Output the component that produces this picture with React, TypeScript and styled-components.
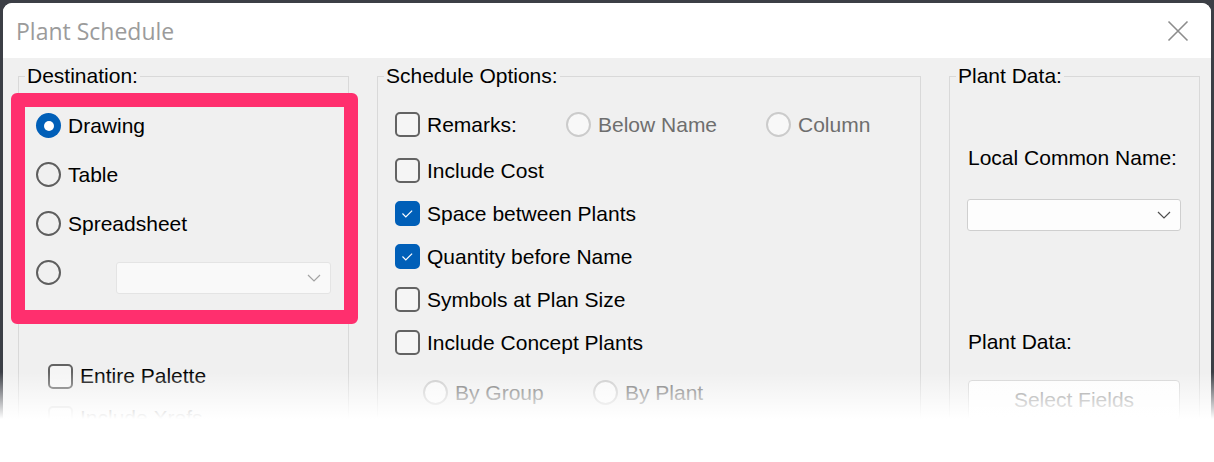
import React from "react";
import styled, { createGlobalStyle, css } from "styled-components";

const GlobalStyle = createGlobalStyle`
  html, body {
    margin: 0;
    padding: 0;
    background: #3c3f46;
  }
  body {
    font-family: "Liberation Sans", Arial, sans-serif;
  }
  * {
    box-sizing: border-box;
  }
`;

const Page = styled.div`
  position: relative;
  width: 1214px;
  height: 462px;
  padding: 3px 3px 0 3px;
  background: #3c3f46;
  overflow: hidden;
`;

const Dialog = styled.div`
  height: 100%;
  display: flex;
  flex-direction: column;
  border-radius: 9px 9px 0 0;
  overflow: hidden;
  background: #f0f0f0;
`;

const TitleBar = styled.div`
  flex: none;
  height: 55px;
  display: flex;
  align-items: center;
  justify-content: space-between;
  padding: 0 22px 0 13px;
  background: #fff;
`;

const Title = styled.div`
  font-family: "Open Sans", "Noto Sans", sans-serif;
  font-size: 23px;
  color: #9b9b9b;
`;

const Body = styled.div`
  display: flex;
  align-items: flex-start;
  gap: 28px;
  padding: 6px 9px 0 15px;
`;

const Group = styled.fieldset<{ $width: number }>`
  width: ${(p) => p.$width}px;
  min-width: 0;
  height: 420px;
  margin: 0;
  padding: 0;
  border: 1px solid #d9d9d9;
`;

const Legend = styled.legend`
  margin-left: 6px;
  padding: 0 2px;
  font-size: 21px;
  line-height: 24px;
  color: #000;
`;

const GroupBody = styled.div<{ $top: number; $left: number }>`
  display: flex;
  flex-direction: column;
  align-items: flex-start;
  padding: ${(p) => p.$top}px 0 0 ${(p) => p.$left}px;
`;

const RadioList = styled.div`
  position: relative;
  display: flex;
  flex-direction: column;
`;

const Highlight = styled.div`
  position: absolute;
  left: -25px;
  top: -8px;
  width: 347px;
  height: 231px;
  border: 14px solid #ff2f6e;
  border-radius: 6px;
  pointer-events: none;
`;

const Row = styled.div<{ $h?: number; $mt?: number; $indent?: number }>`
  display: flex;
  align-items: center;
  height: ${(p) => p.$h ?? 43}px;
  margin-top: ${(p) => p.$mt ?? 0}px;
  padding-left: ${(p) => p.$indent ?? 0}px;
`;

const Item = styled.label<{ $width?: number; $disabled?: boolean }>`
  display: flex;
  align-items: center;
  gap: 7px;
  width: ${(p) => (p.$width ? `${p.$width}px` : "auto")};
  font-size: 21px;
  color: ${(p) => (p.$disabled ? "#6e6e6e" : "#000")};
  white-space: nowrap;
`;

const RadioCircle = styled.span<{ $checked?: boolean; $disabled?: boolean }>`
  position: relative;
  flex: none;
  width: 25px;
  height: 25px;
  border-radius: 50%;
  border: 2px solid #5e5e5e;
  background: transparent;
  ${(p) =>
    p.$checked &&
    css`
      border: none;
      background: #005fb8;
      &::after {
        content: "";
        position: absolute;
        left: 7.5px;
        top: 7.5px;
        width: 10px;
        height: 10px;
        border-radius: 50%;
        background: #fff;
      }
    `}
  ${(p) =>
    p.$disabled &&
    css`
      border-color: #cbcbcb;
      background: #f8f8f8;
    `}
`;

const CheckBox = styled.span<{ $checked?: boolean; $disabled?: boolean }>`
  flex: none;
  width: 25px;
  height: 25px;
  display: flex;
  align-items: center;
  justify-content: center;
  border-radius: 5px;
  border: 2px solid #636363;
  background: #f5f5f5;
  ${(p) =>
    p.$checked &&
    css`
      border-color: #005fb8;
      background: #005fb8;
    `}
  ${(p) =>
    p.$disabled &&
    css`
      border-color: #cfcfcf;
      background: #f8f8f8;
    `}
`;

const Select = styled.div<{ $width: number; $disabled?: boolean; $mt?: number; $ml?: number }>`
  width: ${(p) => p.$width}px;
  height: 32px;
  margin-top: ${(p) => p.$mt ?? 0}px;
  margin-left: ${(p) => p.$ml ?? 0}px;
  display: flex;
  align-items: center;
  justify-content: flex-end;
  padding-right: 9px;
  border-radius: 3px;
  border: 1px solid ${(p) => (p.$disabled ? "#e4e4e4" : "#cfcfcf")};
  background: ${(p) => (p.$disabled ? "#f9f9f9" : "#fdfdfd")};
  color: ${(p) => (p.$disabled ? "#a3a3a3" : "#4e4e4e")};
`;

const FieldLabel = styled.div<{ $mt?: number }>`
  margin-top: ${(p) => p.$mt ?? 0}px;
  margin-left: 1px;
  font-size: 21px;
  line-height: 24px;
  color: #000;
  white-space: nowrap;
`;

const Button = styled.button<{ $mt?: number }>`
  width: 212px;
  height: 40px;
  margin-top: ${(p) => p.$mt ?? 0}px;
  margin-left: 1px;
  border: 1px solid #d4d4d4;
  border-radius: 4px;
  background: #fdfdfd;
  font-family: "Liberation Sans", Arial, sans-serif;
  font-size: 21px;
  color: #8a8a8a;
`;

const Fade = styled.div`
  position: absolute;
  left: 0;
  right: 0;
  bottom: 0;
  height: 90px;
  background: linear-gradient(to bottom, rgba(255, 255, 255, 0) 0, #fff 47px, #fff 100%);
  pointer-events: none;
`;

const CloseIcon = () => (
  <svg width="22" height="22" viewBox="0 0 22 22">
    <path d="M1.5 1.5 L20.5 20.5 M20.5 1.5 L1.5 20.5" stroke="#8c8c8c" strokeWidth="1.6" fill="none" />
  </svg>
);

const Chevron = () => (
  <svg width="14" height="8" viewBox="0 0 14 8">
    <polyline points="1,1 7,7 13,1" stroke="currentColor" strokeWidth="1.2" fill="none" />
  </svg>
);

const Radio = ({ label, checked, disabled, width }: { label?: string; checked?: boolean; disabled?: boolean; width?: number }) => (
  <Item $width={width} $disabled={disabled}>
    <RadioCircle $checked={checked} $disabled={disabled} />
    {label}
  </Item>
);

const Check = ({ label, checked, disabled, width }: { label: string; checked?: boolean; disabled?: boolean; width?: number }) => (
  <Item $width={width} $disabled={disabled}>
    <CheckBox $checked={checked} $disabled={disabled}>
      {checked && (
        <svg width="25" height="25" viewBox="0 0 25 25">
          <polyline points="6.5,12.5 10.5,16.5 18,9" stroke="#fff" strokeWidth="1.4" fill="none" />
        </svg>
      )}
    </CheckBox>
    {label}
  </Item>
);

const options = [
  { label: "Include Cost", checked: false },
  { label: "Space between Plants", checked: true },
  { label: "Quantity before Name", checked: true },
  { label: "Symbols at Plan Size", checked: false },
  { label: "Include Concept Plants", checked: false },
];

export default function App() {
  return (
    <Page>
      <GlobalStyle />
      <Dialog>
        <TitleBar>
          <Title>Plant Schedule</Title>
          <CloseIcon />
        </TitleBar>
        <Body>
          <Group $width={331}>
            <Legend>Destination:</Legend>
            <GroupBody $top={13} $left={17}>
              <RadioList>
                <Row $h={49}>
                  <Radio label="Drawing" checked />
                </Row>
                <Row $h={49}>
                  <Radio label="Table" />
                </Row>
                <Row $h={49}>
                  <Radio label="Spreadsheet" />
                </Row>
                <Row $h={49}>
                  <Radio />
                  <Select $width={215} $disabled $mt={10} $ml={55}>
                    <Chevron />
                  </Select>
                </Row>
                <Highlight />
              </RadioList>
              <Row $mt={58} $indent={12} $h={42}>
                <Check label="Entire Palette" />
              </Row>
              <Row $indent={12} $h={42}>
                <Check label="Include Xrefs" disabled />
              </Row>
            </GroupBody>
          </Group>

          <Group $width={544}>
            <Legend>Schedule Options:</Legend>
            <GroupBody $top={15} $left={17}>
              <Row>
                <Check label="Remarks:" width={171} />
                <Radio label="Below Name" disabled width={200} />
                <Radio label="Column" disabled />
              </Row>
              {options.map((o, i) => (
                <Row key={o.label} $mt={i === 0 ? 3 : 0}>
                  <Check label={o.label} checked={o.checked} />
                </Row>
              ))}
              <Row $mt={7} $indent={28}>
                <Radio label="By Group" disabled width={170} />
                <Radio label="By Plant" disabled />
              </Row>
            </GroupBody>
          </Group>

          <Group $width={251}>
            <Legend>Plant Data:</Legend>
            <GroupBody $top={58} $left={17}>
              <FieldLabel>Local Common Name:</FieldLabel>
              <Select $width={214} $mt={29}>
                <Chevron />
              </Select>
              <FieldLabel $mt={99}>Plant Data:</FieldLabel>
              <Button $mt={26}>Select Fields</Button>
            </GroupBody>
          </Group>
        </Body>
      </Dialog>
      <Fade />
    </Page>
  );
}
